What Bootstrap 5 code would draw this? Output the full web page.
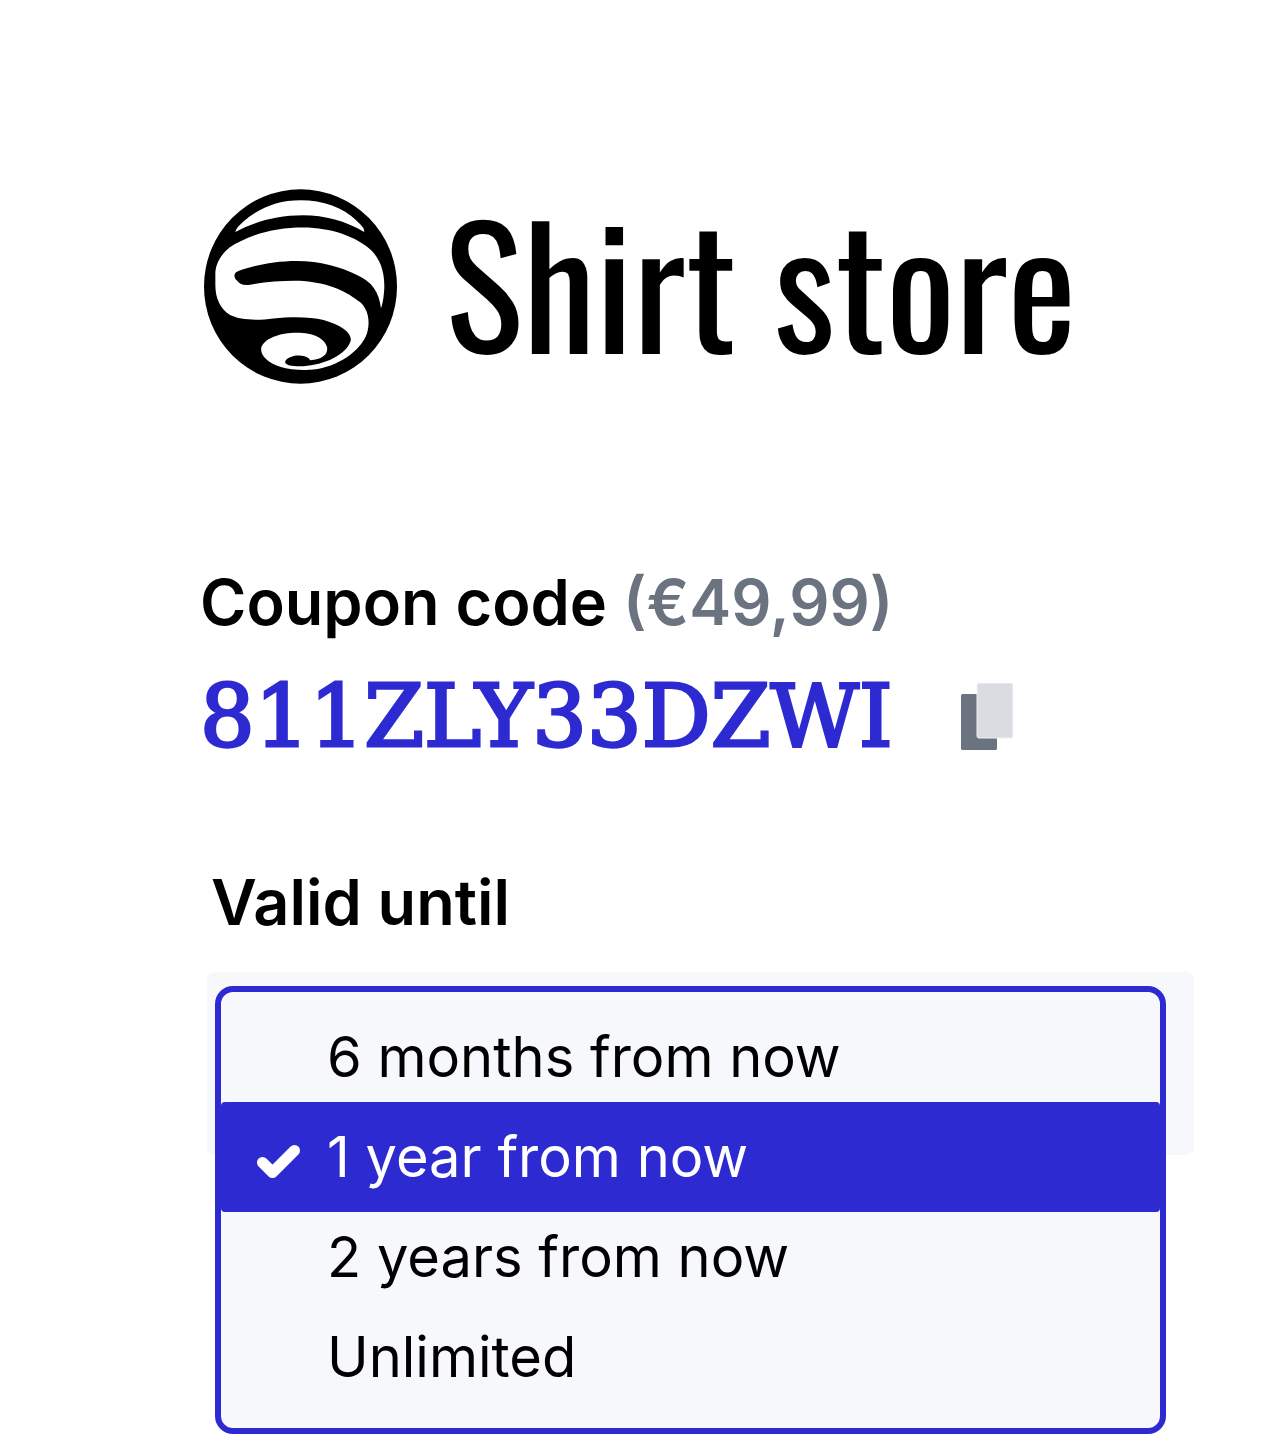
<!DOCTYPE html>
<html lang="en">
<head>
<meta charset="utf-8">
<meta name="viewport" content="width=device-width, initial-scale=1">
<title>Shirt store coupon</title>
<link href="https://cdn.jsdelivr.net/npm/bootstrap@5.3.0/dist/css/bootstrap.min.css" rel="stylesheet">
<style>
  :root { --brand: #2d2ad1; --panel: #f7f8fc; --muted: #6b7280; }
  body { font-family: Inter, "Liberation Sans", sans-serif; color: #000; background: #fff; }
  /* the bottom padding leaves room for the open menu */
  .coupon-page { padding: 188px 79px 279px 200px; }
  .brand-row { gap: 48px; height: 196px; padding-left: 4px; }
  .brand-mark { width: 193px; height: 195px; }
  .brand-name { font-family: Oswald, "Roboto Condensed", "Liberation Sans Narrow", "Liberation Sans", sans-serif; font-size: 164px; line-height: 184px; padding-bottom: 12px; }
  .coupon-block { margin-top: 178px; }
  .field-title { font-size: 63px; line-height: 80px; font-weight: 600; }
  .amount { color: var(--muted); }
  .code-row { gap: 68px; margin-top: 24px; }
  .coupon-code { font-family: "DejaVu Serif", serif; font-size: 86px; line-height: 100px; color: var(--brand); -webkit-text-stroke: 3px var(--brand); }
  .copy-btn svg { width: 52px; height: 67px; }
  .valid-block { margin-top: 96px; padding-left: 7px; }
  .valid-block .field-title { padding-left: 4px; }
  .picker { margin-top: 30px; }
  .valid-select { height: 183px; border: 0; border-radius: 8px; background: var(--panel); font-size: 56px; padding-left: 120px; appearance: none; }
  .valid-menu { top: 14px; left: 8px; right: 28px; border: 6px solid var(--brand); border-radius: 18px; background: var(--panel); padding: 15px 0 21px; --bs-dropdown-link-active-bg: var(--brand); --bs-dropdown-link-color: #000; --bs-dropdown-zindex: 2; }
  .valid-menu .dropdown-item { height: 100px; padding: 0 0 0 106px; font-size: 56px; line-height: 100px; }
  .valid-menu .dropdown-item.active { height: 110px; line-height: 110px; margin: -5px 0; border-radius: 4px; padding-left: 35px; }
  .tick { width: 45px; height: 35px; margin: 8px 26px 0 0; }
</style>
<script src="https://cdn.jsdelivr.net/npm/bootstrap@5.3.0/dist/js/bootstrap.bundle.min.js"></script>
</head>
<body>
<main class="coupon-page">
  <header class="brand-row d-flex align-items-center text-nowrap">
    <svg class="brand-mark flex-shrink-0" viewBox="42 43 578 583" aria-hidden="true">
      <ellipse cx="331" cy="334.500" rx="289" ry="291"/>
      <path fill="#fff" d="M136 171C138 160 148 152 160 140C210 97 265 76 331 76C398 76 460 98 500 138C514 152 522 158 522 171C465 138 405 121 338 121C260 121 195 140 136 171Z"/>
      <path fill="#fff" d="M76 290C80 250 110 217 150 200C210 170 270 158 340 158C420 158 500 185 545 228C575 260 583 300 582 340C580 370 577 388 572 400C566 350 545 320 500 300C450 275 390 258 320 258C250 258 190 272 145 288C128 295 132 308 140 316C148 328 160 332 180 329C230 320 290 316 340 318C420 325 470 350 510 382C535 405 540 440 530 475C510 530 440 575 370 583C345 586 300 585 270 575C235 562 212 545 213 520C220 490 270 473 320 473C370 473 405 490 411 518C412 540 395 552 360 555C355 545 340 541 320 541C300 543 285 552 285 562C290 572 310 574 340 573C400 570 470 540 482 495C482 470 450 450 400 435C360 424 300 425 250 430C200 437 150 435 120 420C90 400 76 370 76 330Z"/>
    </svg>
    <span class="brand-name">Shirt store</span>
  </header>

  <section class="coupon-block">
    <h1 class="field-title m-0">Coupon code <span class="amount">(€49,99)</span></h1>
    <div class="code-row d-flex align-items-center">
      <span class="coupon-code">811ZLY33DZWI</span>
      <button type="button" class="copy-btn btn p-0 border-0 d-flex" aria-label="Copy code">
        <svg viewBox="0 0 52 67" aria-hidden="true">
          <rect y="11" width="36" height="56" rx="1.500" fill="#6b7280"/>
          <rect x="16" y="0" width="36" height="55" rx="2" fill="#dadce1" stroke="#f1f2f4"/>
        </svg>
      </button>
    </div>
  </section>

  <section class="valid-block">
    <label class="field-title d-block" for="valid">Valid until</label>
    <div class="picker position-relative">
      <select id="valid" class="valid-select w-100 d-block">
        <option>6 months from now</option>
        <option selected>1 year from now</option>
        <option>2 years from now</option>
        <option>Unlimited</option>
      </select>
      <div class="valid-menu dropdown-menu show">
        <button type="button" class="dropdown-item">6 months from now</button>
        <button type="button" class="dropdown-item active d-flex align-items-center"><svg class="tick flex-shrink-0" viewBox="0 0 45 35" fill="none" stroke="#fff" stroke-width="11" stroke-linecap="round" stroke-linejoin="round" aria-hidden="true"><path d="M6.500 18.500L16.500 28.500L38.500 6.500"/></svg>1 year from now</button>
        <button type="button" class="dropdown-item">2 years from now</button>
        <button type="button" class="dropdown-item">Unlimited</button>
      </div>
    </div>
  </section>
</main>
</body>
</html>
